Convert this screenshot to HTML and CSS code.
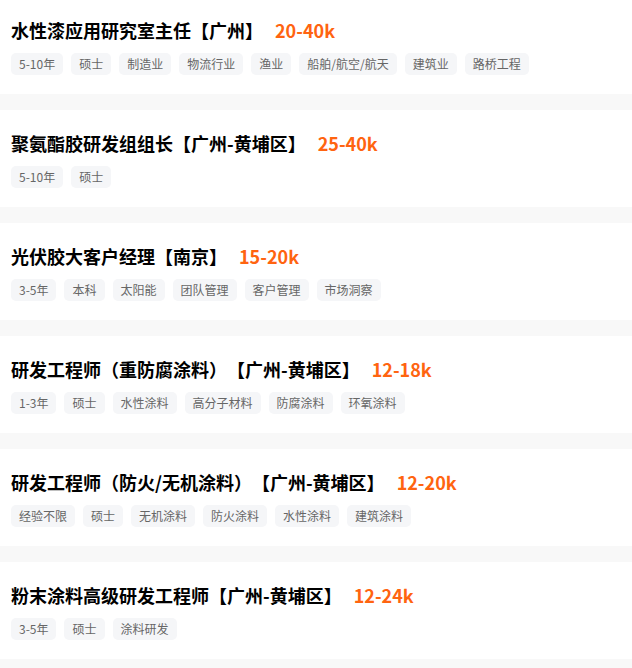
FILE: index.html
```html
<!doctype html>
<html lang="zh-CN">
  <head>
    <meta charset="UTF-8" />
    <meta name="viewport" content="width=device-width, initial-scale=1.0" />
    <title>职位列表</title>
    <link rel="stylesheet" href="styles.css">
  </head>
  <body>
    <div class="job-list">
      <div class="job">
        <div class="job-head">
          <span class="job-title">水性漆应用研究室主任【广州】</span>
          <span class="job-salary">20-40k</span>
        </div>
        <div class="tags">
          <span class="tag">5-10年</span>
          <span class="tag">硕士</span>
          <span class="tag">制造业</span>
          <span class="tag">物流行业</span>
          <span class="tag">渔业</span>
          <span class="tag">船舶/航空/航天</span>
          <span class="tag">建筑业</span>
          <span class="tag">路桥工程</span>
        </div>
      </div>

      <div class="job">
        <div class="job-head">
          <span class="job-title">聚氨酯胶研发组组长【广州-黄埔区】</span>
          <span class="job-salary">25-40k</span>
        </div>
        <div class="tags">
          <span class="tag">5-10年</span>
          <span class="tag">硕士</span>
        </div>
      </div>

      <div class="job">
        <div class="job-head">
          <span class="job-title">光伏胶大客户经理【南京】</span>
          <span class="job-salary">15-20k</span>
        </div>
        <div class="tags">
          <span class="tag">3-5年</span>
          <span class="tag">本科</span>
          <span class="tag">太阳能</span>
          <span class="tag">团队管理</span>
          <span class="tag">客户管理</span>
          <span class="tag">市场洞察</span>
        </div>
      </div>

      <div class="job">
        <div class="job-head">
          <span class="job-title">研发工程师（重防腐涂料）【广州-黄埔区】</span>
          <span class="job-salary">12-18k</span>
        </div>
        <div class="tags">
          <span class="tag">1-3年</span>
          <span class="tag">硕士</span>
          <span class="tag">水性涂料</span>
          <span class="tag">高分子材料</span>
          <span class="tag">防腐涂料</span>
          <span class="tag">环氧涂料</span>
        </div>
      </div>

      <div class="job">
        <div class="job-head">
          <span class="job-title">研发工程师（防火/无机涂料）【广州-黄埔区】</span>
          <span class="job-salary">12-20k</span>
        </div>
        <div class="tags">
          <span class="tag">经验不限</span>
          <span class="tag">硕士</span>
          <span class="tag">无机涂料</span>
          <span class="tag">防火涂料</span>
          <span class="tag">水性涂料</span>
          <span class="tag">建筑涂料</span>
        </div>
      </div>

      <div class="job">
        <div class="job-head">
          <span class="job-title">粉末涂料高级研发工程师【广州-黄埔区】</span>
          <span class="job-salary">12-24k</span>
        </div>
        <div class="tags">
          <span class="tag">3-5年</span>
          <span class="tag">硕士</span>
          <span class="tag">涂料研发</span>
        </div>
      </div>
    </div>
  </body>
</html>
```

FILE: styles.css
```css
html {
  overflow: hidden;
}
body {
  font-family: "Noto Sans CJK SC", "Noto Sans", sans-serif;
  margin: 0;
  background: #f8f8f8;
}
.job-list {
  display: flex;
  flex-direction: column;
  gap: 16px;
  margin-top: -3px;
}
.job {
  background: #fff;
  padding: 20px 11px 19px;
}
.job-head {
  display: flex;
  align-items: center;
  gap: 12px;
  height: 26px;
}
.job-title {
  font-size: 18px;
  font-weight: bold;
  color: #000;
  line-height: 26px;
  white-space: nowrap;
  text-spacing-trim: space-all;
}
.job-salary {
  font-size: 18px;
  font-weight: bold;
  color: #ff6410;
  line-height: 26px;
}
.tags {
  display: flex;
  flex-wrap: wrap;
  gap: 8px;
  margin-top: 10px;
}
.tag {
  font-size: 12px;
  line-height: 22px;
  height: 22px;
  padding: 0 8px;
  color: #666;
  background: #f5f6f8;
  border-radius: 5px;
}
```
